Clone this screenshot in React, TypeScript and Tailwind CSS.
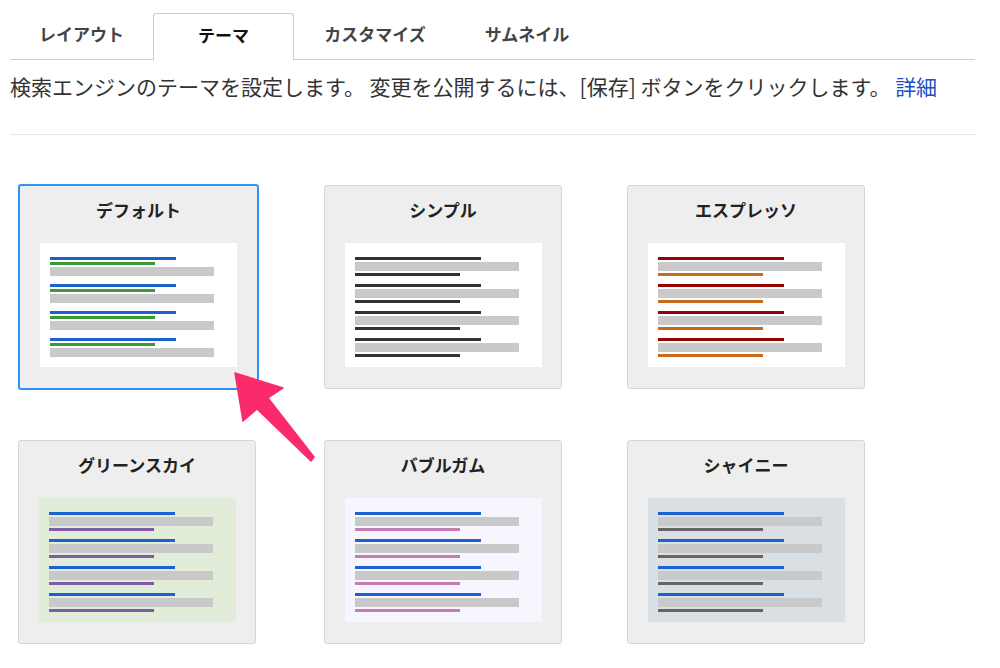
import React from "react";

type Theme = {
  name: string;
  bg: string;
  kind: "default" | "other";
  title: string;
  url: string;
  selected?: boolean;
};

const themes: Theme[] = [
  { name: "デフォルト", bg: "bg-white", kind: "default", title: "bg-[#1b62d0]", url: "bg-[#3c9a35]", selected: true },
  { name: "シンプル", bg: "bg-white", kind: "other", title: "bg-[#333333]", url: "bg-[#333333]" },
  { name: "エスプレッソ", bg: "bg-white", kind: "other", title: "bg-[#990000]", url: "bg-[#c8691c]" },
  { name: "グリーンスカイ", bg: "bg-[#e1edd9]", kind: "other", title: "bg-[#1b62d0]", url: "bg-[#7b5ea7]" },
  { name: "バブルガム", bg: "bg-[#f7f5fd]", kind: "other", title: "bg-[#1b62d0]", url: "bg-[#c77bb4]" },
  { name: "シャイニー", bg: "bg-[#dadfe3]", kind: "other", title: "bg-[#1b62d0]", url: "bg-[#666666]" },
];

function Preview({ t }: { t: Theme }) {
  return (
    <div className={`w-[197px] h-[124px] ${t.bg} pl-[10px] pt-[14px] flex flex-col gap-[8px]`}>
      {[0, 1, 2, 3].map((i) =>
        t.kind === "default" ? (
          <div key={i} className="flex flex-col gap-[2px]">
            <div className={`w-[126px] h-[3px] ${t.title}`} />
            <div className={`w-[105px] h-[3px] ${t.url}`} />
            <div className="w-[164px] h-[9px] bg-[#c9c9c9]" />
          </div>
        ) : (
          <div key={i} className="flex flex-col gap-[2px]">
            <div className={`w-[126px] h-[3px] ${t.title}`} />
            <div className="w-[164px] h-[9px] bg-[#c9c9c9]" />
            <div className={`w-[105px] h-[3px] ${t.url}`} />
          </div>
        )
      )}
    </div>
  );
}

function Card({ t }: { t: Theme }) {
  const cls = t.selected
    ? "w-[241px] h-[206px] -mt-px border-2 border-[#2f93fb] rounded-[3px]"
    : "w-[238px] h-[204px] border border-[#d6d6d6] rounded-[3px]";
  return (
    <div className={`${cls} bg-[#eeeeee] flex flex-col items-center pt-[12px]`}>
      <div className="text-[17px] leading-[24px] font-bold text-[#222]">{t.name}</div>
      <div className="mt-[21px]">
        <Preview t={t} />
      </div>
    </div>
  );
}

export default function App() {
  const tabs = [
    { label: "レイアウト", w: "w-[143px]" },
    { label: "テーマ", w: "w-[141px]", active: true },
    { label: "カスタマイズ", w: "w-[162px]" },
    { label: "サムネイル", w: "w-[142px]" },
  ];
  return (
    <div className="relative w-[1000px] h-[668px] bg-white overflow-hidden font-['Noto_Sans_CJK_JP','Liberation_Sans',sans-serif]">
      <div className="ml-[10px] w-[965px] pt-[13px]">
        <div className="flex h-[47px] border-b border-[#cccccc]">
          {tabs.map((tab) =>
            tab.active ? (
              <div
                key={tab.label}
                className={`${tab.w} h-[47px] pb-[4px] bg-white border border-b-0 border-[#cccccc] rounded-t-[3px] flex items-center justify-center text-[17px] font-bold text-[#111]`}
              >
                {tab.label}
              </div>
            ) : (
              <div
                key={tab.label}
                className={`${tab.w} h-[46px] pb-[4px] flex items-center justify-center text-[17px] font-bold text-[#444]`}
              >
                {tab.label}
              </div>
            )
          )}
        </div>
        <p className="mt-[12px] text-[21px] leading-[28px] text-[#333] whitespace-nowrap">
          検索エンジンのテーマを設定します。 変更を公開するには、[保存] ボタンをクリックします。{" "}
          <span className="text-[#1a4fc4]">詳細</span>
        </p>
        <div className="mt-[34px] h-px bg-[#e6e6e6]" />
        <div className="mt-[50px] pl-[8px] flex flex-col gap-[51px]">
          <div className="grid grid-cols-[306px_303px_241px] h-[204px] items-start">
            {themes.slice(0, 3).map((t) => (
              <Card key={t.name} t={t} />
            ))}
          </div>
          <div className="grid grid-cols-[306px_303px_241px] h-[204px] items-start">
            {themes.slice(3).map((t) => (
              <Card key={t.name} t={t} />
            ))}
          </div>
        </div>
      </div>
      <svg className="absolute left-0 top-0 pointer-events-none" width="1000" height="668">
        <polygon
          points="235,373 283,388 268,398 314,457 311,461 257,409 243,421"
          fill="#fb2b6b"
          stroke="#fb2b6b"
          strokeWidth="1.5"
          strokeLinejoin="round"
        />
      </svg>
    </div>
  );
}
